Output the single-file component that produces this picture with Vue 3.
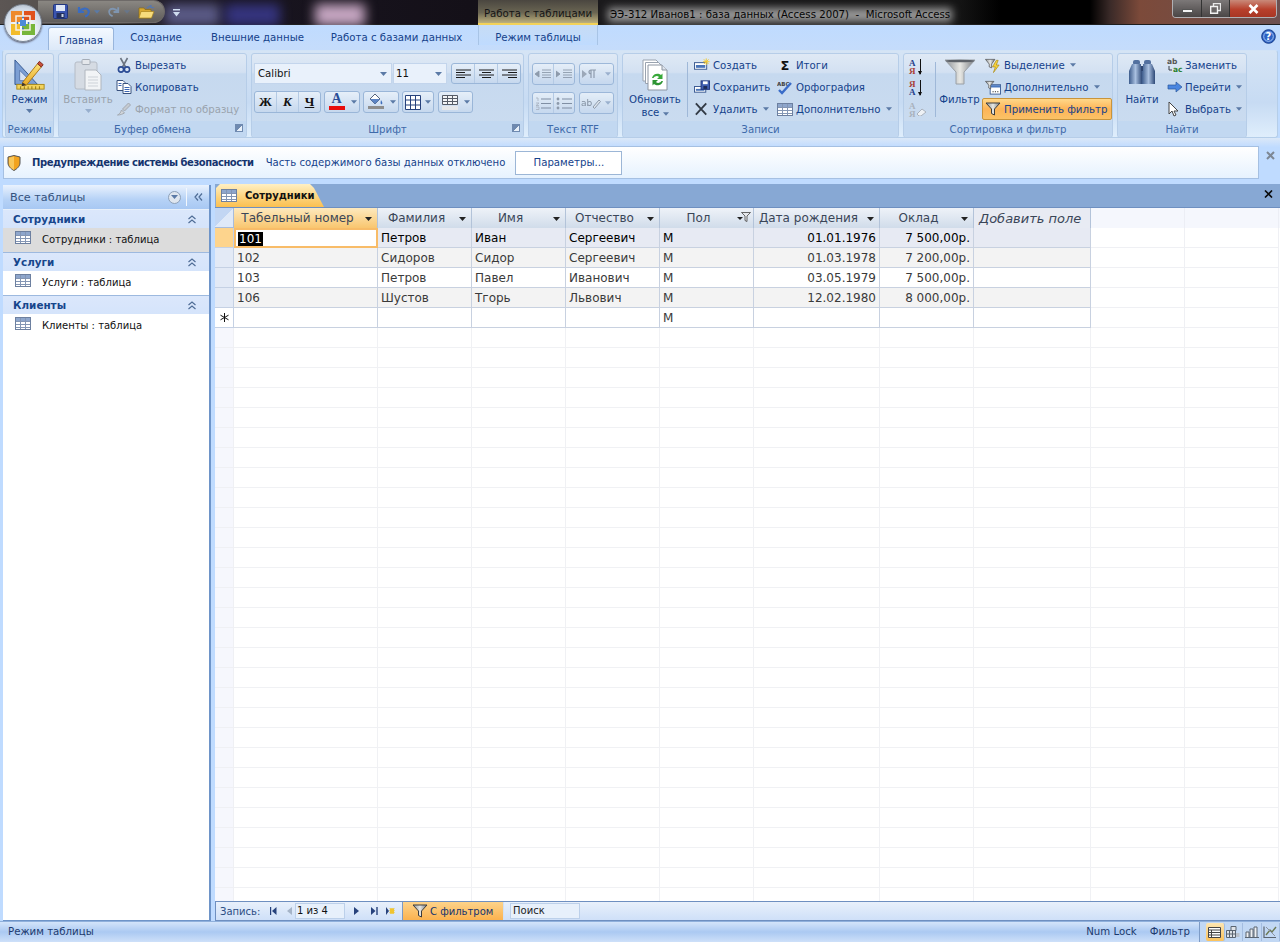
<template>
  <div class="window">
    <!-- icon sprite -->
    <svg class="sprite" width="0" height="0">
      <defs>
        <linearGradient id="funnelGrad" x1="0" y1="0" x2="1" y2="0">
          <stop offset="0" stop-color="#8a8f94" />
          <stop offset="0.5" stop-color="#e8e8e4" />
          <stop offset="1" stop-color="#75797e" />
        </linearGradient>
        <linearGradient id="binoGrad" x1="0" y1="0" x2="1" y2="0">
          <stop offset="0" stop-color="#3d5c8c" />
          <stop offset="0.5" stop-color="#a9c0e0" />
          <stop offset="1" stop-color="#2f4a78" />
        </linearGradient>
        <linearGradient id="pencilGrad" x1="0" y1="0" x2="0" y2="1">
          <stop offset="0" stop-color="#fbe27a" />
          <stop offset="1" stop-color="#e8a823" />
        </linearGradient>
      </defs>
      <symbol id="tbl" viewBox="0 0 16 13">
        <rect x="0.500" y="0.500" width="15" height="12" fill="#fff" stroke="#6d80a0" />
        <rect x="1" y="1" width="14" height="3" fill="#8ea6cc" />
        <path d="M1 4.500h14M1 7.500h14M1 10.500h14M5.500 1v11M10.500 1v11" stroke="#8496b4" fill="none" />
      </symbol>
      <symbol id="funnel" viewBox="0 0 16 14">
        <path d="M1 1h14L9.500 7v6l-3-1.500V7z" fill="url(#funnelGrad)" stroke="#3c3c3c" stroke-width="1" />
      </symbol>
      <symbol id="caret" viewBox="0 0 7 4">
        <path d="M0 0h7L3.500 4z" fill="#5b7aa6" />
      </symbol>
    </svg>

    <!-- title bar -->
    <header class="titlebar">
      <div class="glow glow-a"></div>
      <div class="glow glow-b"></div>
      <div class="glow glow-c"></div>
      <div class="qat">
        <svg width="15" height="15" viewBox="0 0 15 15">
          <rect x="0.500" y="0.500" width="14" height="14" rx="1" fill="#3a55b0" stroke="#23367c" />
          <rect x="3" y="1" width="9" height="6" fill="#dfe7f6" />
          <rect x="3.500" y="9" width="8" height="5" fill="#23305c" />
          <rect x="8.500" y="10" width="2" height="3" fill="#cdd7ea" />
        </svg>
        <svg class="undo" width="15" height="13" viewBox="0 0 15 13">
          <path d="M3 2v5h5M3.500 6.500C6 3 11 2.500 12.500 5.500c1 2.500-1 5-3.500 6" fill="none" stroke="#3a6cc0" stroke-width="2.200" />
        </svg>
        <svg class="mini-caret" width="6" height="4"><use href="#caret" /></svg>
        <svg class="redo" width="14" height="13" viewBox="0 0 15 13">
          <path d="M12 2v5H7M11.500 6.500C9 3 4 2.500 2.500 5.500c-1 2.500 1 5 3.500 6" fill="none" stroke="#7f95b0" stroke-width="2" />
        </svg>
        <svg class="mini-caret dim" width="6" height="4"><use href="#caret" /></svg>
        <svg class="folder" width="17" height="14" viewBox="0 0 17 14">
          <path d="M1 3h5l1 1.500h6V13H1z" fill="#d9a930" stroke="#8b6a14" stroke-width="0.700" />
          <path d="M3 6.500h13L13.500 13H1z" fill="#f7dc7c" stroke="#a9841c" stroke-width="0.700" />
          <path d="M9 3l4-2.500v2h3" fill="none" stroke="#5577b0" stroke-width="1.200" />
        </svg>
      </div>
      <svg class="qat-more" width="7" height="8" viewBox="0 0 7 8">
        <path d="M0 0h7v1.500H0zM0 3h7L3.500 7.500z" fill="#cfdcf0" />
      </svg>
      <div class="tool-tab">Работа с таблицами</div>
      <div class="app-title">ЭЭ-312 Иванов1 : база данных (Access 2007)&nbsp; -&nbsp; Microsoft Access</div>
      <div class="win-btns">
        <div class="win-btn wb-min"><span class="min-mark"></span></div>
        <div class="win-btn wb-max">
          <svg width="11" height="11" viewBox="0 0 11 11">
            <path d="M3.500 0.500h7v7h-7z" fill="none" stroke="#e8e8e8" stroke-width="1.400" />
            <path d="M0.700 3.500h6.800v6.800H0.700z" fill="#6a6666" stroke="#f2f2f2" stroke-width="1.400" />
          </svg>
        </div>
        <div class="win-btn wb-close">
          <svg width="11" height="10" viewBox="0 0 11 10"><path d="M1.500 1l8 8M9.500 1l-8 8" stroke="#fff" stroke-width="2.600" /></svg>
        </div>
      </div>
    </header>

    <!-- office button -->
    <div class="office-btn">
      <svg width="26" height="26" viewBox="0 0 26 26">
        <path d="M1 1h11v11H1z" fill="#ee8a2c" />
        <path d="M14 1h11v9H14z" fill="#e0521d" />
        <path d="M1 14h9v11H1z" fill="#f3bc2b" />
        <path d="M12 14h13v11H12z" fill="#78b63a" />
        <path d="M6 6h14v14H6z" fill="none" stroke="#f5f0e6" stroke-width="1.500" />
        <path d="M10 10h6v6h-6z" fill="#4d8bd8" />
        <path d="M12 7.500h2M12 18.500h2M7.500 12v2M18.500 12v2" stroke="#3e78c4" stroke-width="1.500" />
      </svg>
    </div>

    <!-- tabs -->
    <nav class="tabs">
      <div v-for="t in tabs" :key="t.name" class="tab" :class="{ active: t.active, context: t.context }" :style="{ width: t.w + 'px' }">{{ t.name }}</div>
      <div class="help">
        <svg width="15" height="15" viewBox="0 0 15 15">
          <circle cx="7.500" cy="7.500" r="6.800" fill="#2d62c4" stroke="#1b3f8c" />
          <circle cx="7.500" cy="7.500" r="4.800" fill="none" stroke="#a6c4f2" />
          <text x="7.500" y="11" text-anchor="middle" class="help-q">?</text>
        </svg>
      </div>
    </nav>

    <!-- ribbon -->
    <section class="ribbon">
      <div class="group" style="width: 49px">
        <div class="group-body center-body">
          <div class="large">
            <svg class="large-ico" width="32" height="34" viewBox="0 0 34 36" preserveAspectRatio="xMidYMin meet">
              <path d="M1 1v26h24z" fill="#7c9fd4" stroke="#31558f" />
              <path d="M6 12v11h11z" fill="#d6e2f4" stroke="#5778ad" />
              <rect x="3" y="27" width="29" height="5" fill="#f3d35c" stroke="#a98a1a" />
              <path d="M7 29v3M11 29v3M15 29v3M19 29v3M23 29v3M27 29v3" stroke="#8c7214" />
              <path d="M9 25L25 5l4 3.500L13 28z" fill="url(#pencilGrad)" stroke="#a87414" />
              <path d="M25 5l2-2.500 4 3.500-2 2.500z" fill="#c8503c" stroke="#7e2a1c" />
              <path d="M9 25l-1 4 5-1z" fill="#40352a" />
            </svg>
            <span class="large-text">Режим</span>
            <svg class="down" width="7" height="4"><use href="#caret" /></svg>
          </div>
        </div>
        <div class="group-label">Режимы</div>
      </div>

      <div class="group" style="width: 189px">
        <div class="group-body">
          <div class="large paste">
            <svg class="large-ico" width="28" height="34" viewBox="0 0 28 34" preserveAspectRatio="xMidYMin meet">
              <rect x="1" y="3" width="22" height="27" rx="2" fill="#d5dbe3" stroke="#b5bcc6" />
              <rect x="8" y="0.500" width="8" height="5" rx="1" fill="#e4e7eb" stroke="#a6adb7" />
              <path d="M11 11h11l5 5v15H11z" fill="#f2f4f6" stroke="#b0b6be" />
              <path d="M14 18h10M14 21h10M14 24h10M14 27h10" stroke="#cdd2d8" />
            </svg>
            <span class="large-text off">Вставить</span>
            <svg class="down dim" width="7" height="4"><use href="#caret" /></svg>
          </div>
          <div class="col clip-col">
            <div class="small">
              <svg class="ico" width="15" height="16" viewBox="0 0 15 16">
                <path d="M4 1l5 9M11 1L6 10" stroke="#6b7480" stroke-width="1.600" />
                <circle cx="4.500" cy="12.500" r="2.600" fill="none" stroke="#2a4b94" stroke-width="1.600" />
                <circle cx="10.500" cy="12.500" r="2.600" fill="none" stroke="#2a4b94" stroke-width="1.600" />
              </svg>
              <span>Вырезать</span>
            </div>
            <div class="small">
              <svg class="ico" width="15" height="14" viewBox="0 0 15 14">
                <path d="M0.500 0.500h6l2 2v8h-8z" fill="#fff" stroke="#39527e" />
                <path d="M6.500 3.500h5l3 3v7h-8z" fill="#fff" stroke="#39527e" />
                <path d="M8 7.500h5M8 9.500h5M8 11.500h5M2 3.500h3M2 5.500h3" stroke="#3b66b4" />
              </svg>
              <span>Копировать</span>
            </div>
            <div class="small off">
              <svg class="ico" width="15" height="14" viewBox="0 0 15 14">
                <path d="M1 13c2-1 3-2 4-5l3 3c-2 1-4 2-7 2z" fill="#d2d6db" stroke="#a3a9b1" />
                <path d="M6 7l6-6 2 2-6 6z" fill="#c5cad0" stroke="#a3a9b1" />
              </svg>
              <span>Формат по образцу</span>
            </div>
          </div>
        </div>
        <div class="group-label">Буфер обмена<span class="launcher"></span></div>
      </div>

      <div class="group" style="width: 273px">
        <div class="group-body stack font-body">
          <div class="tool-row">
            <div class="select font-name">Calibri<svg width="7" height="4"><use href="#caret" /></svg></div>
            <div class="select font-size">11<svg width="7" height="4"><use href="#caret" /></svg></div>
            <div class="btn-set align-set">
              <div v-for="a in aligns" :key="a" class="cell">
                <svg width="15" height="10" viewBox="0 0 15 10"><path :d="a" stroke="#1a1a1a" fill="none" /></svg>
              </div>
            </div>
          </div>
          <div class="tool-row tight">
            <div class="btn-set">
              <div class="cell letter">Ж</div>
              <div class="cell letter it">К</div>
              <div class="cell letter ul">Ч</div>
            </div>
            <div class="btn-set">
              <div class="cell color-cell">
                <span class="a-letter">А</span>
                <span class="a-bar"></span>
              </div>
              <div class="cell tiny"><svg width="6" height="4"><use href="#caret" /></svg></div>
            </div>
            <div class="btn-set">
              <div class="cell color-cell">
                <svg width="17" height="13" viewBox="0 0 17 13">
                  <path d="M3 6l5-5 5 5-5 5z" fill="#fff" stroke="#55647c" />
                  <path d="M3 6h10l-5 5z" fill="#5c84c4" />
                  <path d="M14 7c1 2 2 3 1 4s-2 0-1-4z" fill="#3d6dbb" />
                </svg>
                <span class="a-bar gray"></span>
              </div>
              <div class="cell tiny"><svg width="6" height="4"><use href="#caret" /></svg></div>
            </div>
            <div class="btn-set">
              <div class="cell grid-cell">
                <svg width="16" height="15" viewBox="0 0 16 15"><path d="M0.500 0.500h15v14H0.500zM0.500 5h15M0.500 10h15M5.500 0.500v14M10.500 0.500v14" fill="#fff" stroke="#27427c" /></svg>
              </div>
              <div class="cell tiny"><svg width="6" height="4"><use href="#caret" /></svg></div>
            </div>
            <div class="btn-set gridline-set">
              <div class="cell grid-cell wide">
                <svg width="18" height="15" viewBox="0 0 18 15">
                  <path d="M1.500 0.500h15v9h-15zM1.500 3.500h15M1.500 6.500h15M6.500 0.500v9M11.500 0.500v9" fill="#f3f4f6" stroke="#555b66" />
                  <rect x="1" y="11" width="16" height="4" fill="#e5e7ea" />
                </svg>
              </div>
              <div class="cell tiny"><svg width="6" height="4"><use href="#caret" /></svg></div>
            </div>
          </div>
        </div>
        <div class="group-label">Шрифт<span class="launcher"></span></div>
      </div>

      <div class="group" style="width: 90px">
        <div class="group-body stack rtf-body">
          <div class="tool-row">
            <div class="btn-set">
              <div class="cell rtf-cell"><svg width="16" height="11" viewBox="0 0 16 11"><path d="M7 1h9M7 3.500h9M7 6h9M7 8.500h9M0 5l4-3v6z" stroke="#8a97a8" fill="#8a97a8" stroke-width="0.900" /></svg></div>
              <div class="cell rtf-cell"><svg width="16" height="11" viewBox="0 0 16 11"><path d="M7 1h9M7 3.500h9M7 6h9M7 8.500h9M4 5L0 2v6z" stroke="#8a97a8" fill="#8a97a8" stroke-width="0.900" /></svg></div>
            </div>
            <div class="btn-set">
              <div class="cell rtf-wide"><svg width="18" height="10" viewBox="0 0 18 10"><path d="M0 1l5 4-5 4z" fill="#9aa6b6" /><path d="M9 9V1h5M12 1v8M9 1a2 2 0 0 0 0 4" stroke="#8a97a8" fill="none" stroke-width="1.200" /></svg></div>
              <div class="cell tiny dimmed"><svg width="6" height="4"><use href="#caret" /></svg></div>
            </div>
          </div>
          <div class="tool-row">
            <div class="btn-set">
              <div class="cell rtf-cell"><svg width="16" height="13" viewBox="0 0 16 13"><path d="M6 2h10M6 6.500h10M6 11h10" stroke="#7d8ba0" /><path d="M1 1h2v3M1 6h3l-3 2.500h3M1 10h3v2.500H1" stroke="#a4aebc" fill="none" stroke-width="0.800" /></svg></div>
              <div class="cell rtf-cell"><svg width="16" height="13" viewBox="0 0 16 13"><path d="M6 2h10M6 6.500h10M6 11h10" stroke="#7d8ba0" /><circle cx="2" cy="2" r="1.400" fill="#8a97a8" /><circle cx="2" cy="6.500" r="1.400" fill="#8a97a8" /><circle cx="2" cy="11" r="1.400" fill="#8a97a8" /></svg></div>
            </div>
            <div class="btn-set">
              <div class="cell rtf-wide"><span class="abc">ab</span><svg width="9" height="11" viewBox="0 0 9 11"><path d="M1 9l6-7 1.500 1.500L2.500 10.500z" fill="#dfe5ec" stroke="#8a97a8" /></svg></div>
              <div class="cell tiny dimmed"><svg width="6" height="4"><use href="#caret" /></svg></div>
            </div>
          </div>
        </div>
        <div class="group-label">Текст RTF</div>
      </div>

      <div class="group" style="width: 277px">
        <div class="group-body">
          <div class="large refresh">
            <svg class="large-ico" width="26" height="32" viewBox="0 0 26 32">
              <path d="M1 1h13l3 3v18H1z" fill="#fff" stroke="#9aa3af" />
              <path d="M3.500 3.500h13l3 3v18h-16z" fill="#fff" stroke="#9aa3af" />
              <path d="M6 6h14l5 5v20H6z" fill="#fff" stroke="#8c95a2" />
              <path d="M20 6v5h5" fill="#dfe5ee" stroke="#8c95a2" />
              <path d="M10 19a5.500 5.500 0 0 1 9-3l1.500-1.500V20h-5.500l2-2a3.500 3.500 0 0 0-5.500 1z" fill="#38a83a" />
              <path d="M21 22a5.500 5.500 0 0 1-9 3l-1.500 1.500V21h5.500l-2 2a3.500 3.500 0 0 0 5.500-1z" fill="#2d9432" />
            </svg>
            <span class="large-text two-line">Обновить<br />все <svg width="6" height="4"><use href="#caret" /></svg></span>
          </div>
          <div class="vsep sep-records"></div>
          <div class="col rec-a">
            <div class="small">
              <svg class="ico" width="17" height="14" viewBox="0 0 17 14">
                <rect x="0.500" y="4.500" width="13" height="7" fill="#fff" stroke="#35558f" />
                <rect x="2" y="7" width="10" height="3" fill="#4a74b8" />
                <path d="M13 0v7M9.500 3.500h7M10.500 1l5 5M15.500 1l-5 5" stroke="#f2c82e" />
              </svg>
              <span>Создать</span>
            </div>
            <div class="small">
              <svg class="ico" width="17" height="14" viewBox="0 0 17 14">
                <rect x="0.500" y="6.500" width="12" height="6" fill="#fff" stroke="#35558f" />
                <rect x="2" y="9" width="9" height="2" fill="#4a74b8" />
                <rect x="7.500" y="0.500" width="9" height="9" fill="#3f5eb0" stroke="#23367c" />
                <rect x="9.500" y="1" width="5" height="3" fill="#fff" />
                <rect x="10" y="6" width="4" height="3" fill="#1f2c58" />
              </svg>
              <span>Сохранить</span>
            </div>
            <div class="small">
              <svg class="ico" width="17" height="14" viewBox="0 0 17 14"><path d="M2 1l11 12M13 1L2 13" stroke="#333b46" stroke-width="2" /></svg>
              <span>Удалить</span>
              <svg class="inl" width="6" height="4"><use href="#caret" /></svg>
            </div>
          </div>
          <div class="col rec-b">
            <div class="small">
              <span class="ico sigma">Σ</span>
              <span>Итоги</span>
            </div>
            <div class="small">
              <svg class="ico" width="16" height="15" viewBox="0 0 16 15">
                <text x="0" y="6" class="abc-mini">ABC</text>
                <path d="M2 10l3 3 9-10" fill="none" stroke="#3a6cc8" stroke-width="2.400" />
              </svg>
              <span>Орфография</span>
            </div>
            <div class="small">
              <svg class="ico" width="16" height="13"><use href="#tbl" /></svg>
              <span>Дополнительно</span>
              <svg class="inl" width="6" height="4"><use href="#caret" /></svg>
            </div>
          </div>
        </div>
        <div class="group-label">Записи</div>
      </div>

      <div class="group" style="width: 210px">
        <div class="group-body">
          <div class="col sort-col">
            <div class="sort-ico"><span class="sa">А</span><span class="sz">Я</span><i></i></div>
            <div class="sort-ico"><span class="sz">Я</span><span class="sa">А</span><i></i></div>
            <div class="sort-ico off-sort">
              <span>А</span><span>Я</span>
              <svg width="11" height="8" viewBox="0 0 11 8"><path d="M1 6l5-5 4 3-5 4H3z" fill="#eef1f5" stroke="#aab2bd" /></svg>
            </div>
          </div>
          <div class="vsep sep-sort"></div>
          <div class="large filter">
            <svg class="large-ico" width="32" height="34" viewBox="0 0 32 34">
              <path d="M1 1h30L20 13v12h-8V13z" fill="url(#funnelGrad)" stroke="#9aa0a6" />
              <ellipse cx="16" cy="2" rx="14.500" ry="1.300" fill="#5d6268" />
            </svg>
            <span class="large-text">Фильтр</span>
          </div>
          <div class="col filter-col">
            <div class="small">
              <svg class="ico" width="17" height="15" viewBox="0 0 17 15">
                <path d="M0.500 1h10L7 6v4L4.500 9V6z" fill="url(#funnelGrad)" stroke="#444" stroke-width="0.700" />
                <path d="M12 2L8 9h3l-2 6 6-8h-3l2-5z" fill="#f7d23a" stroke="#a8860f" stroke-width="0.700" />
              </svg>
              <span>Выделение</span>
              <svg class="inl" width="6" height="4"><use href="#caret" /></svg>
            </div>
            <div class="small">
              <svg class="ico" width="17" height="15" viewBox="0 0 17 15">
                <rect x="5.500" y="4.500" width="11" height="10" fill="#fff" stroke="#3e5f96" />
                <rect x="6" y="5" width="10" height="2.500" fill="#4a78c0" />
                <path d="M8 12h1.200M10.500 12h1.200M13 12h1.200" stroke="#222" />
                <path d="M0.500 1h9L6 5v4L4 8V5z" fill="url(#funnelGrad)" stroke="#444" stroke-width="0.700" />
              </svg>
              <span>Дополнительно</span>
              <svg class="inl" width="6" height="4"><use href="#caret" /></svg>
            </div>
            <div class="small hot">
              <svg class="ico" width="16" height="14"><use href="#funnel" /></svg>
              <span>Применить фильтр</span>
            </div>
          </div>
        </div>
        <div class="group-label">Сортировка и фильтр</div>
      </div>

      <div class="group" style="width: 130px">
        <div class="group-body">
          <div class="large find">
            <svg class="large-ico" width="28" height="34" viewBox="0 0 28 34">
              <rect x="5" y="1" width="7" height="5" rx="2" fill="#52709f" />
              <rect x="16" y="1" width="7" height="5" rx="2" fill="#52709f" />
              <rect x="11" y="7" width="6" height="9" fill="#2d4570" />
              <path d="M4 5h9v7h1v13H1V12z" fill="url(#binoGrad)" />
              <path d="M24 5h-9v7h-1v13h13V12z" fill="url(#binoGrad)" />
            </svg>
            <span class="large-text">Найти</span>
          </div>
          <div class="col find-col">
            <div class="small">
              <svg class="ico" width="16" height="15" viewBox="0 0 16 15">
                <text x="0" y="6" class="ab-mini">ab</text>
                <text x="6" y="14" class="ac-mini">ac</text>
                <path d="M2 8v4h3" fill="none" stroke="#3a3f46" />
              </svg>
              <span>Заменить</span>
            </div>
            <div class="small">
              <svg class="ico" width="16" height="12" viewBox="0 0 16 12"><path d="M1 4h8V1l6 5-6 5V8H1z" fill="#4a86e0" stroke="#2a569c" stroke-width="0.700" /></svg>
              <span>Перейти</span>
              <svg class="inl" width="6" height="4"><use href="#caret" /></svg>
            </div>
            <div class="small">
              <svg class="ico" width="16" height="16" viewBox="0 0 16 16"><path d="M2 1v12l3-3 2 5 2-1-2-4h4z" fill="#fff" stroke="#444" /></svg>
              <span>Выбрать</span>
              <svg class="inl" width="6" height="4"><use href="#caret" /></svg>
            </div>
          </div>
        </div>
        <div class="group-label">Найти</div>
      </div>
    </section>

    <!-- message bar -->
    <div class="message-wrap">
      <div class="message">
        <svg class="shield" width="14" height="16" viewBox="0 0 14 16">
          <path d="M7 0.500l6 1.500v6c0 3-3 6-6 7.500C4 14 1 11 1 8V2z" fill="#f2a31f" stroke="#555" />
          <path d="M7 1.500V15C4 13.500 2 11 2 8V2.800z" fill="#f8c75a" />
        </svg>
        <b>Предупреждение системы безопасности</b>
        <span>Часть содержимого базы данных отключено</span>
        <div class="params">Параметры...</div>
      </div>
      <svg class="msg-x" width="9" height="9" viewBox="0 0 9 9"><path d="M1 1l7 7M8 1L1 8" stroke="#7d8794" stroke-width="2" /></svg>
    </div>

    <!-- main -->
    <main class="main">
      <aside class="nav">
        <div class="nav-head">
          <span>Все таблицы</span>
          <div class="round-btn"><svg width="7" height="4"><use href="#caret" /></svg></div>
          <div class="nav-sep"></div>
          <svg class="chev" width="9" height="8" viewBox="0 0 9 8"><path d="M4 0.500L1 4l3 3.500M8 0.500L5 4l3 3.500" fill="none" stroke="#4f6d96" stroke-width="1.200" /></svg>
        </div>
        <div v-for="(g, i) in navGroups" :key="g" class="nav-group">
          <div class="nav-title">
            <span>{{ g }}</span>
            <svg width="8" height="9" viewBox="0 0 8 9"><path d="M0.500 4L4 1l3.500 3M0.500 8L4 5l3.500 3" fill="none" stroke="#4f6d96" stroke-width="1.200" /></svg>
          </div>
          <div class="nav-item" :class="{ selected: i === 0 }">
            <svg width="16" height="13"><use href="#tbl" /></svg>
            <span>{{ g }} : таблица</span>
          </div>
        </div>
      </aside>

      <div class="doc">
        <div class="doc-strip">
          <div class="doc-tab">
            <svg width="16" height="13"><use href="#tbl" /></svg>
            <span>Сотрудники</span>
          </div>
          <svg class="doc-x" width="9" height="8" viewBox="0 0 9 8"><path d="M1 0.500l7 7M8 0.500l-7 7" stroke="#0a0a0a" stroke-width="1.600" /></svg>
        </div>

        <div class="sheet">
          <div class="row head">
            <div class="sel corner"></div>
            <div v-for="c in columns" :key="c.name" class="hcell" :class="{ first: c.first, add: c.add }" :style="{ width: c.w + 'px' }">
              <span class="hname">{{ c.name }}</span>
              <svg v-if="c.sort" class="hcaret" width="7" height="4" viewBox="0 0 7 4"><path d="M0 0h7L3.500 4z" fill="#222" /></svg>
              <svg v-if="c.filtered" class="hfilter" width="14" height="10" viewBox="0 0 14 10">
                <path d="M0 5h6L3 8z" fill="#222" />
                <path d="M4.500 0.500h9L10 4v5.500L8 8.500V4z" fill="#e6e8ec" stroke="#444" stroke-width="0.800" />
              </svg>
            </div>
            <div class="hcell blank" style="width: 94px"></div>
            <div class="hcell blank" style="width: 94px"></div>
          </div>

          <div v-for="(r, i) in rows" :key="i" class="row" :class="{ current: i === 0, alt: i % 2 === 1 }">
            <div class="sel" :class="{ cur: i === 0 }"></div>
            <div
              v-for="(c, j) in columns" :key="c.name"
              class="cell-d"
              :class="{ right: c.right, focus: i === 0 && j === 0 }"
              :style="{ width: c.w + 'px' }"
            ><span v-if="i === 0 && j === 0" class="picked">{{ r[j] }}</span><template v-else>{{ r[j] }}</template></div>
            <div class="cell-d empty" style="width: 94px"></div>
            <div class="cell-d empty" style="width: 94px"></div>
          </div>

          <div class="row new">
            <div class="sel star">
              <svg width="9" height="9" viewBox="0 0 9 9"><path d="M4.500 0v9M0.500 2.200l8 4.600M8.500 2.200l-8 4.600" stroke="#111" /></svg>
            </div>
            <div v-for="(c, j) in columns" :key="c.name" class="cell-d" :style="{ width: c.w + 'px' }">{{ j === 4 ? 'М' : '' }}</div>
            <div class="cell-d empty" style="width: 94px"></div>
            <div class="cell-d empty" style="width: 94px"></div>
          </div>

          <div v-for="n in 29" :key="'e' + n" class="row ghost">
            <div class="sel"></div>
            <div v-for="c in columns" :key="c.name" class="cell-d" :style="{ width: c.w + 'px' }"></div>
            <div class="cell-d" style="width: 94px"></div>
            <div class="cell-d" style="width: 94px"></div>
          </div>
        </div>

        <div class="recbar">
          <span class="rec-label">Запись:</span>
          <svg class="rb" width="7" height="8" viewBox="0 0 7 8"><path d="M0.500 0v8" stroke="#27427c" stroke-width="1.400" /><path d="M6.500 0v8L2 4z" fill="#27427c" /></svg>
          <svg class="rb rb-prev" width="5" height="8" viewBox="0 0 5 8"><path d="M5 0v8L0 4z" fill="#a5b4c8" /></svg>
          <div class="rec-input">1 из 4</div>
          <svg class="rb rb-next" width="5" height="8" viewBox="0 0 5 8"><path d="M0 0v8l5-4z" fill="#27427c" /></svg>
          <svg class="rb rb-last" width="7" height="8" viewBox="0 0 7 8"><path d="M0 0v8l4.500-4z" fill="#27427c" /><path d="M6 0v8" stroke="#27427c" stroke-width="1.400" /></svg>
          <svg class="rb rb-new" width="9" height="8" viewBox="0 0 9 8"><path d="M0 0v8l3-4z" fill="#27427c" /><rect x="3.500" y="1" width="5" height="6" fill="#f0c42e" stroke="#d7e4f6" stroke-dasharray="1 1" /></svg>
          <div class="filter-state">
            <svg width="16" height="14"><use href="#funnel" /></svg>
            <span>С фильтром</span>
          </div>
          <div class="search">Поиск</div>
        </div>
      </div>
    </main>

    <footer class="status">
      <span class="st-left">Режим таблицы</span>
      <span class="st-num">Num Lock</span>
      <span class="st-filter">Фильтр</span>
      <div class="views">
        <div class="view active">
          <svg width="13" height="11" viewBox="0 0 13 11"><path d="M0.500 0.500h12v10H0.500zM0.500 3h12M3.500 3v7.500M0.500 5.500h12M0.500 8h12" fill="#fff" stroke="#444" /></svg>
        </div>
        <div class="view">
          <svg width="14" height="12" viewBox="0 0 14 12"><path d="M0.500 4.500h9v7h-9zM3.500 4.500v7M6.500 4.500v7M0.500 8h9M5 0.500h5v4H5z" fill="#dfe3e8" stroke="#5a6470" /><path d="M10 7h3.500v4H10z" fill="#b8c0cb" /></svg>
        </div>
        <div class="view">
          <svg width="14" height="12" viewBox="0 0 14 12"><path d="M1 11V6h3v5M5 11V3h3v8M9 11V1h3v10M0 11.500h14" fill="#eef0f3" stroke="#5a6470" /></svg>
        </div>
        <div class="view">
          <svg width="14" height="12" viewBox="0 0 14 12"><path d="M1 0.500v11h12" fill="none" stroke="#5a6470" stroke-width="1.200" /><path d="M3 9l4-5 2 2 4-5" fill="none" stroke="#6d7a55" stroke-width="1.400" /><path d="M3 1l9 9" stroke="#8a93a0" /></svg>
        </div>
      </div>
    </footer>
  </div>
</template>

<script setup>
const tabs = [
  { name: 'Главная', w: 66, active: true },
  { name: 'Создание', w: 84 },
  { name: 'Внешние данные', w: 119 },
  { name: 'Работа с базами данных', w: 159 },
  { name: 'Режим таблицы', w: 120, context: true },
]

const aligns = [
  'M0 1h15M0 3.500h9M0 6h15M0 8.500h9',
  'M0 1h15M3 3.500h9M0 6h15M3 8.500h9',
  'M0 1h15M6 3.500h9M0 6h15M6 8.500h9',
]

const navGroups = ['Сотрудники', 'Услуги', 'Клиенты']

const columns = [
  { name: 'Табельный номер', w: 144, sort: true, first: true },
  { name: 'Фамилия', w: 94, sort: true },
  { name: 'Имя', w: 94, sort: true },
  { name: 'Отчество', w: 94, sort: true },
  { name: 'Пол', w: 94, filtered: true },
  { name: 'Дата рождения', w: 126, sort: true, right: true },
  { name: 'Оклад', w: 94, sort: true, right: true },
  { name: 'Добавить поле', w: 117, add: true },
]

const rows = [
  ['101', 'Петров', 'Иван', 'Сергеевич', 'М', '01.01.1976', '7 500,00р.', ''],
  ['102', 'Сидоров', 'Сидор', 'Сергеевич', 'М', '01.03.1978', '7 200,00р.', ''],
  ['103', 'Петров', 'Павел', 'Иванович', 'М', '03.05.1979', '7 500,00р.', ''],
  ['106', 'Шустов', 'Тгорь', 'Львович', 'М', '12.02.1980', '8 000,00р.', ''],
]
</script>

<style scoped>
.window {
  position: relative;
  width: 1280px;
  height: 942px;
  overflow: hidden;
  display: flex;
  flex-direction: column;
  background: #bfdbff;
  font-family: "DejaVu Sans", "Noto Sans", sans-serif;
  font-size: 10.2px;
  color: #15428b;
}
.sprite { position: absolute; }

/* title bar */
.titlebar {
  position: relative;
  height: 25px;
  flex: none;
  display: flex;
  background: linear-gradient(90deg, #5c5654 0, #4c4846 120px, #1a1622 170px, #141018 470px, #1b1a1c 600px, #141414 960px, #000 1000px, #000 1090px, #3a2a28 1110px, #7c4a3a 1140px, #6c5050 1280px);
  border-bottom: 1px solid #1e1e1e;
  box-sizing: border-box;
}
.glow { position: absolute; top: 4px; height: 22px; filter: blur(6px); }
.glow-a { left: 165px; width: 55px; background: #5a5a86; }
.glow-b { left: 225px; width: 55px; background: #3c3c96; opacity: 0.8; }
.glow-c { left: 315px; width: 50px; background: #c6a6c2; }
.qat {
  position: relative;
  margin-left: 38px;
  width: 127px;
  height: 23px;
  box-sizing: border-box;
  padding-left: 15px;
  display: flex;
  align-items: center;
  border: 1px solid #6e6a68;
  border-left: none;
  border-radius: 0 12px 12px 0;
  background: linear-gradient(#8a8782, #5f5c5a);
}
.undo { margin-left: 8px; }
.mini-caret { margin-left: 3px; }
.mini-caret.dim { opacity: 0.5; }
.redo { margin-left: 7px; }
.folder { margin-left: 8px; }
.qat-more { position: relative; margin: 9px 0 0 8px; }
.tool-tab {
  position: absolute;
  left: 478px;
  top: 0;
  width: 120px;
  height: 25px;
  box-sizing: border-box;
  padding-top: 8px;
  text-align: center;
  color: #151515;
  background: linear-gradient(#4a4640 0, #6a6552 50%, #bdb07c 92%, #f3d257 92%);
}
.app-title {
  position: absolute;
  left: 606px;
  top: 0;
  height: 25px;
  line-height: 29px;
  padding: 0 4px;
  color: #050505;
  white-space: nowrap;
  isolation: isolate;
}
.app-title::before {
  content: "";
  position: absolute;
  left: 2px;
  right: 2px;
  top: 8px;
  bottom: 3px;
  background: #9a9a9a;
  filter: blur(4px);
  z-index: -1;
}
.win-btns {
  position: absolute;
  right: 3px;
  top: 0;
  display: flex;
  height: 17px;
  border: 1px solid #b0b0b4;
  border-top: none;
  border-radius: 0 0 4px 4px;
  overflow: hidden;
}
.win-btn { display: flex; align-items: center; justify-content: center; }
.wb-min { width: 28px; background: linear-gradient(#7c7878, #4a4646); border-right: 1px solid #333; }
.wb-max { width: 27px; background: linear-gradient(#7c7878, #4a4646); border-right: 1px solid #333; }
.wb-close { width: 46px; background: linear-gradient(#c98a7a, #b8402c 55%, #a83624); }
.min-mark { width: 9px; height: 2px; margin-top: 5px; background: #f4f4f4; border: 1px solid #555; }

.office-btn {
  position: absolute;
  left: 4px;
  top: 4px;
  width: 36px;
  height: 36px;
  border-radius: 50%;
  border: 1px solid #7d8794;
  background: radial-gradient(circle at 50% 70%, #f4f8fc 30%, #cdd8e6 70%, #9aa4b0 100%);
  display: flex;
  align-items: center;
  justify-content: center;
  z-index: 3;
  box-shadow: 0 1px 2px #556;
}

/* tabs */
.tabs {
  height: 25px;
  flex: none;
  display: flex;
  padding-left: 48px;
  box-sizing: border-box;
  background: linear-gradient(#bfdbff, #c5dcfb);
  position: relative;
}
.tab {
  flex: none;
  text-align: center;
  line-height: 26px;
  height: 25px;
  color: #15428b;
}
.tab.active {
  line-height: 25px;
  margin-top: 2px;
  height: 24px;
  box-sizing: border-box;
  background: linear-gradient(#f4f9ff, #dbe8f8);
  border: 1px solid #98b5dc;
  border-bottom: none;
  border-radius: 3px 3px 0 0;
}
.tab.context {
  margin-left: 2px;
  border-left: 1px solid #a8c4e6;
  border-right: 1px solid #a8c4e6;
  background: linear-gradient(#c7dcf5, #bfdbff);
  height: 20px;
  box-sizing: border-box;
}
.help { position: absolute; right: 4px; top: 4px; }
.help-q { font: bold 10px "DejaVu Sans", sans-serif; fill: #fff; }

/* ribbon */
.ribbon {
  height: 88px;
  flex: none;
  margin: 0 2px;
  padding: 2px 31px 0 2px;
  box-sizing: border-box;
  display: flex;
  gap: 4px;
  border: 1px solid #b5cee9;
  border-top: 1px solid #d2e3f6;
  border-radius: 3px;
  background: linear-gradient(#d5e4f5, #c7dbf3 60%, #dfeefc);
  position: relative;
  z-index: 1;
}
.group {
  flex: none;
  height: 85px;
  box-sizing: border-box;
  display: flex;
  flex-direction: column;
  border: 1px solid #b6cde8;
  border-radius: 3px;
  background: linear-gradient(#dfe9f5 0, #d3e1f2 22%, #c6d9ef 24%, #cbdcf0 100%);
  overflow: hidden;
}
.group-body {
  flex: 1;
  display: flex;
  position: relative;
  min-height: 0;
}
.center-body { justify-content: center; }
.group-label {
  height: 16px;
  flex: none;
  position: relative;
  text-align: center;
  line-height: 17px;
  color: #3e6aaa;
  background: #c2d8f1;
}
.launcher {
  position: absolute;
  right: 3px;
  top: 3px;
  width: 6px;
  height: 6px;
  border: 1px solid #6f8ab0;
  background: linear-gradient(135deg, #6f8ab0 50%, #e8f0f9 50%);
}

.large {
  flex: none;
  display: flex;
  flex-direction: column;
  align-items: center;
  padding-top: 5px;
}
.large-ico { height: 34px; flex: none; }
.large-text { margin-top: 0; line-height: 13px; text-align: center; white-space: nowrap; }
.off { color: #9aa3ad; }
.down { margin-top: 3px; }
.down.dim { opacity: 0.45; }
.two-line { line-height: 13px; }

.paste { width: 52px; margin-left: 3px; }
.col { display: flex; flex-direction: column; }
.small {
  height: 22px;
  display: flex;
  align-items: center;
  white-space: nowrap;
}
.small > span:not(.ico) { line-height: 20px; padding-top: 2px; }
.ico { flex: none; width: 16px; margin-right: 3px; }
.inl { margin-left: 5px; }
.clip-col { margin-left: 2px; }
.clip-col .ico { margin-right: 3px; }

.stack { flex-direction: column; gap: 7px; padding: 9px 0 0 2px; }
.tool-row { display: flex; gap: 4px; align-items: flex-start; }
.tool-row.tight { gap: 3px; }
.select {
  height: 21px;
  box-sizing: border-box;
  display: flex;
  align-items: center;
  justify-content: space-between;
  padding: 0 4px 0 2px;
  background: #e9f1fb;
  border: 1px solid #c3d5ec;
  color: #111;
}
.select svg { flex: none; }
.font-name { width: 138px; padding-left: 3px; }
.font-size { width: 54px; margin-left: -3px; }
.btn-set {
  height: 22px;
  display: flex;
  box-sizing: border-box;
  border: 1px solid #9ab6d8;
  border-radius: 3px;
  background: linear-gradient(#e6eff9, #c6d8ee);
  overflow: hidden;
  flex: none;
}
.align-set { height: 21px; }
.cell {
  height: 100%;
  width: 22px;
  display: flex;
  align-items: center;
  justify-content: center;
  border-left: 1px solid #b4cae4;
  position: relative;
}
.cell:first-child { border-left: none; }
.letter { width: 21px; font: bold 13px "Liberation Serif", serif; color: #111; }
.letter.it { font-style: italic; }
.letter.ul { text-decoration: underline; }
.color-cell { width: 23px; flex-direction: column; border-left: none; padding-bottom: 2px; box-sizing: border-box; }
.a-letter { font: bold 14px "Liberation Serif", serif; color: #2a4d96; line-height: 12px; }
.a-bar { display: block; width: 16px; height: 4px; background: #e80c0c; margin-top: 1px; }
.a-bar.gray { background: #8d8d8d; height: 3px; margin-top: 0; }
.tiny { width: 11px; border-left: none; }
.grid-cell { width: 19px; border-left: none; }
.grid-cell.wide { width: 22px; margin-left: 0; }
.gridline-set { margin-left: 1px; }
.rtf-body { gap: 7px; padding-left: 3px; }
.rtf-body .btn-set { opacity: 0.95; }
.rtf-cell { width: 20px; }
.rtf-wide { width: 22px; border-left: none; }
.dimmed { opacity: 0.5; }
.abc { color: #7e8b9c; font-size: 9px; }

.refresh { width: 60px; margin-left: 2px; }
.refresh .large-text { margin-top: 2px; }
.refresh .large-ico { height: 32px; }
.vsep { width: 1px; height: 55px; margin-top: 8px; background: #9fb8d8; flex: none; }
.sep-records { margin-left: 2px; }
.rec-a { margin-left: 6px; width: 83px; }
.rec-b { width: 115px; }
.sigma { font: bold 13px "DejaVu Sans", sans-serif; color: #111; text-align: center; }
.abc-mini { font: bold 5.500px "DejaVu Sans", sans-serif; fill: #444; }

.sort-col { padding: 3px 0 0 5px; width: 24px; gap: 0; }
.sort-ico {
  position: relative;
  height: 22px;
  width: 18px;
  display: flex;
  flex-direction: column;
  font: bold 9px/8px "Liberation Serif", serif;
  color: #24408a;
  padding-top: 2px;
  box-sizing: border-box;
}
.sort-ico .sz { color: #a8403a; }
.sort-ico i {
  position: absolute;
  left: 11px;
  top: 2px;
  width: 1px;
  height: 15px;
  background: #111;
}
.sort-ico i::after {
  content: "";
  position: absolute;
  left: -2px;
  bottom: -1px;
  border: 2.500px solid transparent;
  border-top: 4px solid #111;
  border-bottom: none;
}
.off-sort { color: #a9b2bd; }
.off-sort svg { position: absolute; left: 7px; top: 8px; }
.sep-sort { margin-left: 4px; }
.filter { width: 43px; margin-left: 2px; }
.filter-col { margin-left: 1px; }
.filter-col .small { padding-left: 3px; }
.hot {
  width: 130px;
  box-sizing: border-box;
  border: 1px solid #c8943c;
  border-radius: 2px;
  background: linear-gradient(#ffd88a, #fdb457 50%, #fbc266);
  color: #15428b;
  padding-left: 2px !important;
}
.find { width: 46px; margin-left: 1px; }
.find-col { margin-left: 2px; }
.find-col .ico { margin-right: 2px; }
.ab-mini { font: bold 7.500px "DejaVu Sans", sans-serif; fill: #555; }
.ac-mini { font: bold 7.500px "DejaVu Sans", sans-serif; fill: #2a8030; }

/* message bar */
.message-wrap {
  height: 46px;
  flex: none;
  padding: 8px 0 0 3px;
  box-sizing: border-box;
  display: flex;
  background: linear-gradient(#dbe8f8, #bfdbff 20%);
  position: relative;
}
.message {
  width: 1256px;
  height: 33px;
  box-sizing: border-box;
  display: flex;
  align-items: center;
  padding-left: 3px;
  border: 1px solid #a5c0e2;
  background: linear-gradient(#fff, #e6f2fe);
}
.shield { margin-right: 11px; flex: none; }
.message b { color: #15346e; margin-right: 12px; font-size: 10px; letter-spacing: -0.45px; }
.message span { color: #15428b; font-size: 10.1px; }
.params {
  width: 107px;
  height: 24px;
  margin-left: 10px;
  box-sizing: border-box;
  border: 1px solid #9cb6d6;
  background: #fff;
  text-align: center;
  line-height: 22px;
}
.msg-x { position: absolute; left: 1266px; top: 13px; }

/* main area */
.main {
  height: 737px;
  flex: none;
  display: flex;
  padding: 0 0 0 3px;
  box-sizing: border-box;
}
.nav {
  width: 206px;
  flex: none;
  box-sizing: content-box;
  height: 735px;
  margin-top: 1px;
  background: #fff;
  border-right: 2px solid #6e94c8;
  margin-right: 4px;
  border-bottom: 1px solid #6e94c8;
}
.nav-head {
  height: 25px;
  display: flex;
  align-items: center;
  padding: 0 0 0 7px;
  box-sizing: border-box;
  background: linear-gradient(#eaf2fd, #b6d2f6 60%, #a8c8f3);
  color: #34527d;
  font-size: 11.2px;
  border-bottom: 1px solid #e8f0fa;
}
.nav-head span { flex: 1; }
.round-btn {
  width: 11px;
  height: 11px;
  border: 1px solid #8da0b8;
  border-radius: 50%;
  background: #dfe6ef;
  display: flex;
  align-items: center;
  justify-content: center;
}
.nav-sep { width: 1px; height: 18px; background: #f2f7fd; margin: 0 7px 0 5px; }
.chev { margin-right: 6px; }
.nav-group { border-bottom: 1px solid #9db9df; }
.nav-group:last-child { border-bottom: none; }
.nav-title {
  height: 18px;
  display: flex;
  align-items: center;
  justify-content: space-between;
  padding: 0 13px 0 10px;
  background: linear-gradient(#dbe7fb, #d5e4fb);
  font-weight: bold;
  font-size: 10.4px;
  color: #17468c;
}
.nav-item {
  height: 24px;
  box-sizing: border-box;
  display: flex;
  align-items: center;
  padding: 0 0 2px 12px;
  gap: 11px;
  color: #111;
  background: #fff;
  font-size: 10px;
}
.nav-item svg { margin-top: -3px; flex: none; }
.nav-item.selected { background: #dcdcdc; }

.doc {
  width: 1065px;
  flex: none;
  display: flex;
  flex-direction: column;
}
.doc-strip {
  height: 23px;
  flex: none;
  display: flex;
  align-items: flex-end;
  justify-content: space-between;
  background: #87a8d4;
  border-bottom: 1px solid #6e8fc0;
  box-sizing: content-box;
}
.doc-tab {
  width: 108px;
  height: 23px;
  box-sizing: border-box;
  margin-left: 1px;
  display: flex;
  align-items: center;
  gap: 8px;
  padding-left: 5px;
  color: #111;
  font-weight: bold;
  font-size: 10px;
  background: linear-gradient(#fff0c4, #fdd27a 60%, #fbc050);
  clip-path: polygon(0 4px, 4px 0, 94px 0, 98px 4px, 100% 100%, 0 100%);
}
.doc-tab svg { flex: none; }
.doc-x { margin: 0 7px 9px 0; }

.sheet { flex: 1; overflow: hidden; background: #fff; min-height: 0; }
.row { display: flex; height: 20px; }
.row.head { height: 20px; background: #f5f7fd; }
.sel {
  width: 19px;
  flex: none;
  box-sizing: border-box;
  background: #e3eaf6;
  border-right: 1px solid #c5d1e4;
  border-bottom: 1px solid #c5d1e4;
  display: flex;
  align-items: center;
  justify-content: center;
}
.sel.cur { background: #fdd48d; }
.sel.corner { background: linear-gradient(135deg, #c2d6f3 50%, #dfe9f8 50%); border-color: #a8bcdb; }
.sel.star { background: #fff; }
.row.ghost .sel { background: #f6f7fd; border-color: #eff0f4; }
.hcell {
  flex: none;
  position: relative;
  display: flex;
  align-items: center;
  justify-content: center;
  box-sizing: border-box;
  height: 20px;
  color: #3a4658;
  font-size: 12px;
  background: linear-gradient(#eef2f8, #d0dcea);
  border-right: 1px solid #b3c3d9;
  padding-right: 16px;
  white-space: nowrap;
}
.hcell.first { background: linear-gradient(#fde9be, #f9c66f); }
.hcell.add {
  background: #e8ebf3;
  font-style: italic;
  font-size: 13px;
  padding-right: 0;
  justify-content: flex-start;
  padding-left: 5px;
}
.hcell.blank { background: #f5f7fd; border-right: 1px solid #eceef5; }
.hcaret { position: absolute; right: 5px; top: 9px; }
.hfilter { position: absolute; right: 2px; top: 4px; }

.cell-d {
  flex: none;
  box-sizing: border-box;
  height: 20px;
  padding: 0 3px;
  line-height: 21px;
  font-size: 12px;
  color: #3a3a3a;
  white-space: nowrap;
  border-right: 1px solid #c8d1e0;
  border-bottom: 1px solid #c8d1e0;
}
.cell-d.right { text-align: right; }
.cell-d.empty { border-color: #eff0f4; background: #fff !important; }
.row.alt .cell-d { background: #f3f3f3; }
.row.current .cell-d { background: #e7eaf3; color: #000; }
.row.current .cell-d.focus { background: #fff; border: 2px solid #f8bc68; padding: 0 2px; line-height: 18px; }
.picked { background: #000; color: #fff; padding: 0 1px; }
.row.ghost .cell-d { border-color: #f0f1f4; }

.recbar {
  height: 20px;
  flex: none;
  display: flex;
  align-items: center;
  box-sizing: border-box;
  padding-left: 4px;
  background: linear-gradient(#e8f0fb, #cfe0f8);
  border: 1px solid #6e8fc0;
  border-right: none;
  color: #2b4d84;
  font-size: 10px;
}
.rec-label { width: 50px; }
.rb-prev { margin-left: 10px; }
.rec-input {
  width: 50px;
  height: 16px;
  box-sizing: border-box;
  margin-left: 3px;
  padding-left: 1px;
  line-height: 14px;
  color: #111;
  border: 1px solid #bcd0ea;
  background: #e7f0fb;
}
.rb-next { margin-left: 9px; }
.rb-last { margin-left: 12px; }
.rb-new { margin-left: 8px; }
.filter-state {
  margin-left: 7px;
  width: 102px;
  height: 18px;
  box-sizing: border-box;
  display: flex;
  align-items: center;
  padding-left: 9px;
  gap: 2px;
  color: #15346e;
  background: linear-gradient(#fdd38a, #fbb24f);
  border-left: 1px solid #7c9ac4;
  border-right: 1px solid #d0e0f6;
}
.filter-state svg { flex: none; }
.search {
  margin-left: 6px;
  width: 70px;
  height: 16px;
  box-sizing: border-box;
  padding-left: 2px;
  line-height: 14px;
  color: #222;
  background: #e7f0fb;
  border: 1px solid #bcd0ea;
}

/* status bar */
.status {
  flex: 1;
  display: flex;
  align-items: center;
  background: linear-gradient(#d3e4fa, #abc9f2 50%, #cee0f9);
  border-top: 1px solid #8fb0dc;
  color: #1c3a6e;
}
.st-left { margin-left: 8px; flex: 1; padding-bottom: 2px; }
.st-num { margin-right: 13px; padding-bottom: 2px; }
.st-filter { margin-right: 9px; padding-bottom: 2px; }
.views {
  width: 81px;
  height: 20px;
  box-sizing: border-box;
  padding-left: 6px;
  display: flex;
  border-left: 1px solid #7d9bc6;
  background: #c2d8f4;
}
.view {
  width: 18px;
  height: 18px;
  margin-top: 1px;
  display: flex;
  align-items: center;
  justify-content: center;
  border-right: 1px solid #a4bde0;
}
.view.active { background: linear-gradient(#fde6b2, #fbc25c); border-radius: 2px; }
</style>

<style>
html, body { margin: 0; padding: 0; background: #bfdbff; }
</style>
